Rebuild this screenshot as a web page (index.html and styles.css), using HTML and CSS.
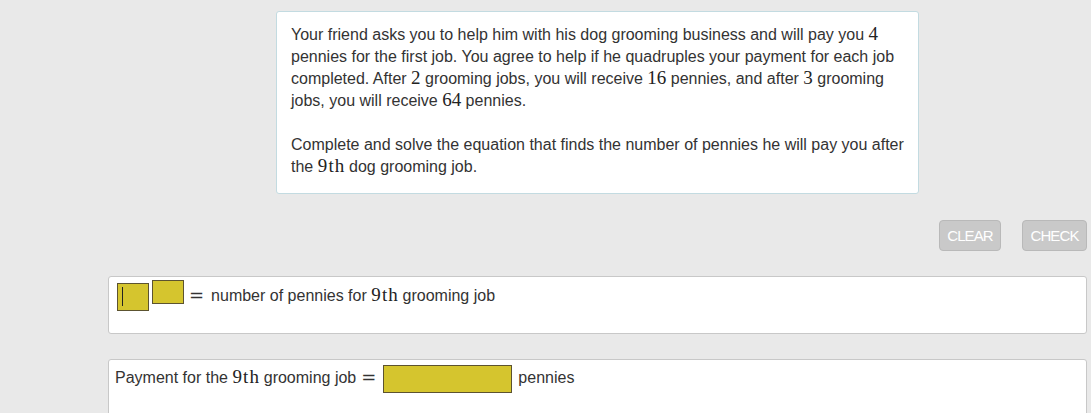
FILE: index.html
```html
<!DOCTYPE html>
<html lang="en">
<head>
<meta charset="utf-8">
<title>Dog grooming pennies</title>
<link rel="stylesheet" href="styles.css">
</head>
<body>
<main class="page">
  <section class="prompt">
    <p>Your friend asks you to help him with his dog grooming business and will pay you <span class="m">4</span> pennies for the first job. You agree to help if he quadruples your payment for each job completed. After <span class="m">2</span> grooming jobs, you will receive <span class="m">16</span> pennies, and after <span class="m">3</span> grooming jobs, you will receive <span class="m">64</span> pennies.</p>
    <p>Complete and solve the equation that finds the number of pennies he will pay you after the <span class="m ord">9th</span> dog grooming job.</p>
  </section>

  <div class="actions">
    <button class="btn btn-clear">CLEAR</button>
    <button class="btn btn-check">CHECK</button>
  </div>

  <section class="answer answer-eq">
    <span class="field base"><span class="caret"></span></span>
    <span class="field expo"></span>
    <span class="eq">=</span>
    <span class="txt">number of pennies for <span class="m ord">9th</span> grooming job</span>
  </section>

  <section class="answer answer-pay">
    <span class="txt">Payment for the <span class="m ord">9th</span> grooming job</span>
    <span class="eq">=</span>
    <span class="field wide"></span>
    <span class="txt">pennies</span>
  </section>
</main>
</body>
</html>
```
FILE: styles.css
```css
html, body {
  margin: 0;
  padding: 0;
}
body {
  background: #e9e9e9;
  font-family: "Liberation Sans", Arial, sans-serif;
  font-size: 16px;
  color: #333;
  overflow: hidden;
}
.page {
  padding: 11px 4px 0 108px;
}
.prompt {
  margin-left: 168px;
  width: 643px;
  box-sizing: border-box;
  background: #fff;
  border: 1px solid #c3dbe1;
  border-radius: 3px;
  padding: 12px 8px 15px 14px;
}
.prompt p {
  margin: 0;
  line-height: 22px;
}
.prompt p + p {
  margin-top: 22px;
}
.m {
  font-family: "Liberation Serif", "Times New Roman", serif;
  font-size: 19px;
  line-height: 16px;
  color: #222;
}
.ord {
  letter-spacing: 1.2px;
  margin-right: -1px;
}
.actions {
  display: flex;
  justify-content: flex-end;
  gap: 21px;
  margin-top: 26px;
}
.btn {
  height: 31px;
  box-sizing: border-box;
  padding: 0;
  background: #c9c9c9;
  border: 1px solid #b9b9b9;
  border-radius: 4px;
  color: #fff;
  font-family: "Liberation Sans", Arial, sans-serif;
  font-size: 15px;
  letter-spacing: -0.9px;
}
.btn-clear {
  width: 62px;
}
.btn-check {
  width: 65px;
}
.answer {
  display: flex;
  align-items: flex-start;
  background: #fff;
  border: 1px solid #c8c8c8;
  border-radius: 3px;
  box-sizing: border-box;
}
.answer-eq {
  margin-top: 25px;
  height: 58px;
  padding: 3px 8px 0 8px;
}
.answer-pay {
  margin-top: 25px;
  height: 80px;
  padding: 5px 6px 0 6px;
}
.field {
  display: block;
  box-sizing: border-box;
  background: #d5c52e;
  border: 1px solid #5c5330;
  position: relative;
}
.field.base {
  width: 32px;
  height: 28px;
  margin-top: 3px;
}
.field.expo {
  width: 32px;
  height: 24px;
  margin-left: 3px;
}
.field.wide {
  width: 129px;
  height: 28px;
}
.caret {
  position: absolute;
  left: 4px;
  top: 3px;
  width: 1px;
  height: 19px;
  background: #222;
}
.txt {
  line-height: 22px;
}
.answer-eq .txt {
  margin-top: 5px;
}
.answer-pay .txt {
  margin-top: 2px;
}
.eq {
  font-family: "DejaVu Serif", serif;
  font-size: 18px;
  line-height: 22px;
  color: #333;
}
.answer-eq .eq {
  margin: 5px 7px 0 5px;
}
.answer-pay .eq {
  margin: 2px 7px 0 5px;
}
.answer-pay .field.wide + .txt {
  margin-left: 6px;
}
```
